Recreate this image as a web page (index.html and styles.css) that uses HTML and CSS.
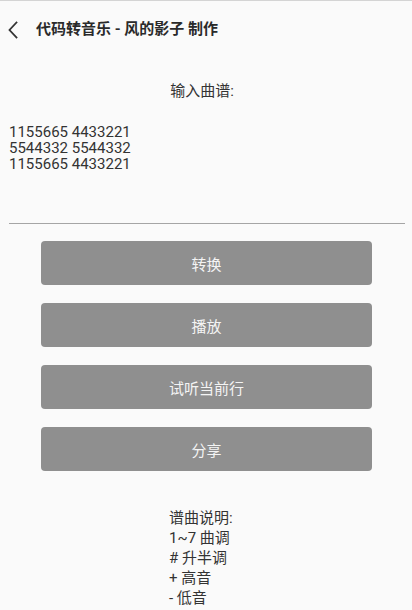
FILE: index.html
```html
<!DOCTYPE html>
<html lang="zh-CN">
<head>
<meta charset="utf-8">
<title>代码转音乐</title>
<link rel="stylesheet" href="styles.css">
</head>
<body>
<div class="app">
  <header class="toolbar">
    <svg class="back" width="12" height="18" viewBox="0 0 12 18" aria-hidden="true">
      <path d="M9.5 1.5 L2.5 9 L9.5 16.5" fill="none" stroke="#333" stroke-width="1.8" stroke-linecap="square"/>
    </svg>
    <h1 class="title">代码转音乐 - 风的影子 制作</h1>
  </header>

  <div class="label">输入曲谱:</div>

  <div class="score">1155665 4433221<br>5544332 5544332<br>1155665 4433221</div>
  <div class="divider"></div>

  <div class="actions">
    <button class="btn">转换</button>
    <button class="btn">播放</button>
    <button class="btn">试听当前行</button>
    <button class="btn">分享</button>
  </div>

  <div class="help">
    <div>谱曲说明:</div>
    <div>1~7 曲调</div>
    <div># 升半调</div>
    <div>+ 高音</div>
    <div>- 低音</div>
  </div>
</div>
</body>
</html>
```

FILE: styles.css
```css
html, body {
  margin: 0;
  padding: 0;
  background: #fafafa;
}

body {
  font-family: Roboto, "Noto Sans CJK SC", sans-serif;
  color: #333;
  height: 610px;
  overflow: hidden;
}

.app {
  border-top: 1px solid #d4d4d4;
  display: flex;
  flex-direction: column;
}

.toolbar {
  display: flex;
  align-items: center;
  height: 56px;
  padding-left: 7px;
}

.back {
  display: block;
  margin-top: 1px;
}

.title {
  margin: 0 0 0 17px;
  font-size: 15px;
  font-weight: bold;
  color: #2a2a2a;
  line-height: 20px;
}

.label {
  margin-top: 24px;
  text-align: center;
  font-size: 15px;
  line-height: 20px;
  padding-right: 8px;
}

.score {
  margin-top: 23px;
  padding-left: 9px;
  font-size: 15px;
  line-height: 16px;
  color: #333;
  height: 99px;
}

.divider {
  margin: 0 7px 0 9px;
  height: 1px;
  background: #a5a5a5;
}

.actions {
  display: flex;
  flex-direction: column;
  align-items: center;
  gap: 18px;
  margin-top: 17px;
}

.btn {
  width: 331px;
  height: 44px;
  margin-left: 1px;
  border: none;
  border-radius: 4px;
  background: #8f8f8f;
  color: #f4f4f4;
  font-family: Roboto, "Noto Sans CJK SC", sans-serif;
  font-size: 15px;
  padding: 0;
}

.help {
  margin-top: 37px;
  padding-left: 169px;
  font-size: 15px;
  line-height: 20px;
  color: #333;
}
```
